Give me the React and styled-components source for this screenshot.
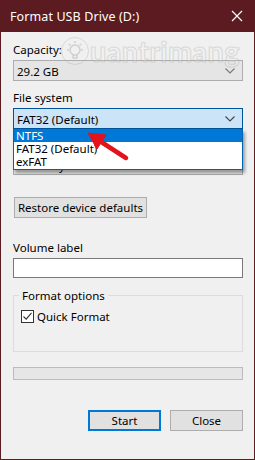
import styled, { createGlobalStyle } from "styled-components";

const GlobalStyle = createGlobalStyle`
  html, body { margin: 0; padding: 0; background: #ffffff; }
  body { font-family: "Noto Sans", "Liberation Sans", sans-serif; }
`;

const Chevron = ({ color = "#555" }) => (
  <svg width="10" height="6" viewBox="0 0 10 6">
    <path d="M0.5 0.5 L5 5 L9.5 0.5" fill="none" stroke={color} strokeWidth="1.1" />
  </svg>
);

const App = () => {
  return (
    <>
      <GlobalStyle />
      <Window>
        <TitleBar>
          <Title>Format USB Drive (D:)</Title>
          <CloseIcon>
            <svg width="12" height="12" viewBox="0 0 12 12">
              <path d="M1 1 L11 11 M11 1 L1 11" stroke="#fff" strokeWidth="1.2" />
            </svg>
          </CloseIcon>
        </TitleBar>

        <Body>
          <Label top="10px">Capacity:</Label>
          <Combo>
            <span>29.2 GB</span>
            <Chevron color="#777" />
          </Combo>

          <Label top="9px">File system</Label>
          <ComboWrap>
            <Combo active>
              <span>FAT32 (Default)</span>
              <Chevron color="#444" />
            </Combo>
            <DropList>
              <Option selected>NTFS</Option>
              <Option>FAT32 (Default)</Option>
              <Option>exFAT</Option>
            </DropList>
            <Arrow width="50" height="40" viewBox="0 0 50 40">
              <path d="M14 12.5 L41 30" stroke="#e3121b" strokeWidth="4.5" strokeLinecap="round" />
              <path d="M3 5 L21 7 L12 21 Z" fill="#e3121b" stroke="#e3121b" strokeWidth="1" strokeLinejoin="round" />
            </Arrow>
          </ComboWrap>

          {/* allocation unit size row, mostly hidden behind the open list */}
          <Spacer />
          <Combo>
            <span>16 kilobytes</span>
            <Chevron color="#777" />
          </Combo>

          <Button top="22px" width="133px">Restore device defaults</Button>

          <Label top="22px">Volume label</Label>
          <TextInput />

          <GroupBox>
            <Legend>Format options</Legend>
            <CheckRow>
              <CheckBox>
                <svg width="11" height="11" viewBox="0 0 11 11">
                  <path d="M1.5 5.5 L4.2 8.2 L9.5 1.8" fill="none" stroke="#333" strokeWidth="1.1" />
                </svg>
              </CheckBox>
              <span>Quick Format</span>
            </CheckRow>
          </GroupBox>

          <Progress />

          <ButtonRow>
            <Button width="73px" primary>Start</Button>
            <Button width="73px">Close</Button>
          </ButtonRow>
        </Body>

        <Watermark>
          <Bulb>
            <svg width="24" height="24" viewBox="0 0 24 24">
              <circle cx="12" cy="11" r="5" fill="none" stroke="rgba(150,150,150,0.35)" strokeWidth="1.5" />
              <path d="M10 16 L10 19 L14 19 L14 16" fill="none" stroke="rgba(150,150,150,0.35)" strokeWidth="1.5" />
              <path d="M12 2 L12 4 M4 11 L6 11 M18 11 L20 11 M6 5 L7.5 6.5 M18 5 L16.5 6.5" stroke="rgba(150,150,150,0.35)" strokeWidth="1.5" />
            </svg>
          </Bulb>
          <span>uantrimang</span>
        </Watermark>
      </Window>
    </>
  );
};

export default App;

const Window = styled.div`
  position: relative;
  width: 255px;
  height: 460px;
  box-sizing: border-box;
  background: #f0f0f0;
  border: 1px solid #5b1b20;
  border-top: none;
  font-size: 11.5px;
  color: #000;
  overflow: hidden;
`;

const TitleBar = styled.div`
  height: 32px;
  background: #5b1b20;
  display: flex;
  align-items: center;
  justify-content: space-between;
  padding: 0 10px 0 9px;
`;

const Title = styled.div`
  color: #fff;
  font-size: 12.5px;
  letter-spacing: 0.1px;
`;

const CloseIcon = styled.div`
  display: flex;
  align-items: center;
  margin-right: 1px;
`;

const Body = styled.div`
  padding: 0 11px 0 12px;
  display: flex;
  flex-direction: column;
`;

const Label = styled.div`
  margin-top: ${({ top }) => top || "0"};
  height: 18px;
  line-height: 15px;
`;

const Spacer = styled.div`
  margin-top: 7px;
  height: 18px;
`;

const ComboWrap = styled.div`
  position: relative;
`;

const Combo = styled.div`
  height: 21px;
  box-sizing: border-box;
  display: flex;
  align-items: center;
  justify-content: space-between;
  padding: 0 7px 0 3px;
  background: ${({ active }) => (active ? "#cce4f7" : "#e5e5e5")};
  border: 1px solid ${({ active }) => (active ? "#005499" : "#adadad")};
  & > span {
    padding-top: 1px;
  }
`;

const DropList = styled.div`
  position: absolute;
  left: 0;
  right: 0;
  top: 21px;
  background: #fff;
  border: 1px solid #0063b1;
  border-top: none;
  box-sizing: border-box;
  box-shadow: 2px 3px 3px rgba(0, 0, 0, 0.35);
  z-index: 2;
  padding-bottom: 1px;
`;

const Option = styled.div`
  height: 13px;
  line-height: 13px;
  padding: 0 2px;
  background: ${({ selected }) => (selected ? "#0078d7" : "transparent")};
  color: ${({ selected }) => (selected ? "#fff" : "#000")};
`;

const Arrow = styled.svg`
  position: absolute;
  left: 72px;
  top: 20px;
  z-index: 3;
`;

const Button = styled.div`
  margin-top: ${({ top }) => top || "0"};
  width: ${({ width }) => width};
  height: 21px;
  box-sizing: border-box;
  display: flex;
  align-items: center;
  justify-content: center;
  background: #e1e1e1;
  border: ${({ primary }) => (primary ? "2px solid #0078d7" : "1px solid #adadad")};
  margin-left: 1px;
`;

const TextInput = styled.div`
  height: 20px;
  box-sizing: border-box;
  background: #fff;
  border: 1px solid #7a7a7a;
`;

const GroupBox = styled.div`
  position: relative;
  margin-top: 17px;
  height: 57px;
  box-sizing: border-box;
  border: 1px solid #dcdcdc;
  padding: 13px 0 0 7px;
`;

const Legend = styled.div`
  position: absolute;
  top: -8px;
  left: 5px;
  padding: 0 3px;
  background: #f0f0f0;
  line-height: 15px;
`;

const CheckRow = styled.div`
  display: flex;
  align-items: center;
  gap: 3px;
`;

const CheckBox = styled.div`
  width: 13px;
  height: 13px;
  box-sizing: border-box;
  border: 1px solid #333;
  background: #fff;
  display: flex;
  align-items: center;
  justify-content: center;
`;

const Progress = styled.div`
  margin-top: 15px;
  height: 13px;
  box-sizing: border-box;
  background: #e6e6e6;
  border: 1px solid #bcbcbc;
`;

const ButtonRow = styled.div`
  margin-top: 30px;
  display: flex;
  justify-content: flex-end;
  gap: 8px;
`;

const Watermark = styled.div`
  position: absolute;
  left: 60px;
  top: 33px;
  display: flex;
  align-items: center;
  gap: 1px;
  color: rgba(255, 255, 255, 0.15);
  font-family: "Lato", sans-serif;
  font-size: 29px;
  font-weight: 700;
  letter-spacing: 0.3px;
  pointer-events: none;
  -webkit-text-stroke: 1.2px rgba(160, 160, 160, 0.3);
`;

const Bulb = styled.div`
  width: 26px;
  height: 26px;
  border-radius: 50%;
  border: 1.5px solid rgba(160, 160, 160, 0.3);
  display: flex;
  align-items: center;
  justify-content: center;
`;
